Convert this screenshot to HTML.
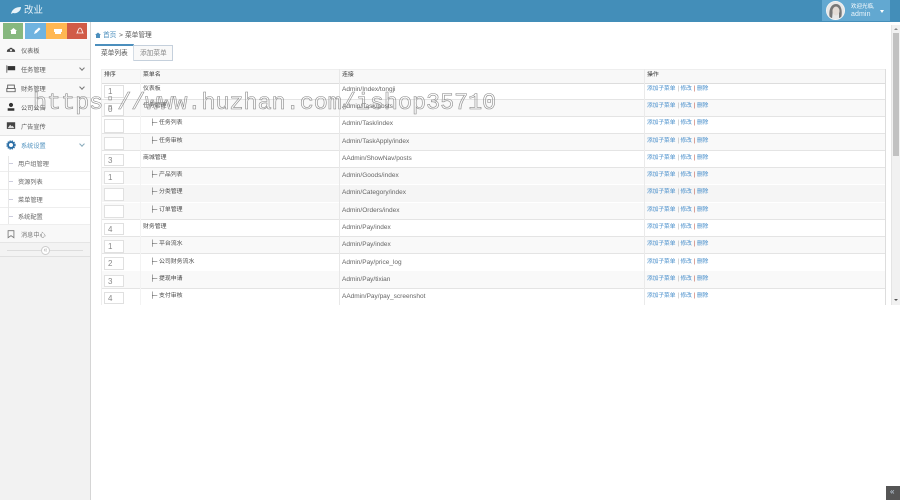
<!DOCTYPE html>
<html>
<head>
<meta charset="utf-8">
<style>
html,body{margin:0;padding:0;width:900px;height:500px;overflow:hidden;background:#fff}
body{font-family:"Liberation Sans","Noto Sans CJK SC",sans-serif;font-size:6.2px;color:#555}
#w{position:absolute;left:0;top:0;width:900px;height:500px;overflow:hidden;filter:blur(.3px)}
.a{position:absolute;white-space:nowrap;line-height:13px}
.box{position:absolute}
.tr{position:absolute;left:101px;width:784px;border-bottom:1px solid #e4e4e4}
.ip{position:absolute;left:104px;width:17px;background:#fff;border:1px solid #e0e0e0;color:#888;font-size:8px;line-height:12px;padding-left:1px;text-indent:2px}
.n{position:absolute;left:143px;white-space:nowrap;line-height:13px;color:#4a4a4a;font-size:5.9px}
.c{left:150px}
.c u{text-decoration:none;display:inline-block;width:9px;font-size:6px;letter-spacing:-1.2px;color:#333}
.l{position:absolute;left:342px;white-space:nowrap;line-height:13px;color:#666;font-size:6.5px}
.o{position:absolute;left:647px;white-space:nowrap;line-height:13px;color:#428bca;font-size:5.7px}
.o i,.o b{font-style:normal;font-weight:normal;font-size:6px;margin:0 1.5px 0 2px}
.o i{color:#aaa}.o b{color:#b74635}
.m{position:absolute;left:0;width:90px;border-bottom:1px solid #e5e5e5;background:#f8f8f8;box-sizing:border-box}
.m span{position:absolute;left:21px;top:4px;line-height:13px;white-space:nowrap;color:#585858}
.m svg{position:absolute;left:6px;top:4px}
.m em{position:absolute;right:6px;top:6px;width:3px;height:3px;border-right:1px solid #777;border-bottom:1px solid #777;transform:rotate(45deg)}
.s{position:absolute;left:0;width:90px;height:17px;background:#fff;border-bottom:1px solid #eee;box-sizing:border-box}
.s span{position:absolute;left:18px;top:3px;line-height:13px;white-space:nowrap;color:#666}
.s:before{content:"";position:absolute;left:9px;top:8px;width:4px;height:1px;background:#ccd}
</style>
</head>
<body>
<div id="w">
<!-- header -->
<div class="box" style="left:0;top:0;width:900px;height:22px;background:#438eb9"></div>
<svg class="box" style="left:10px;top:6px" width="12" height="9" viewBox="0 0 12 9"><path d="M1 8C2 3 6 1 11 1C11 5 7 8 3 7Z" fill="#e8f2f8"/></svg>
<div class="a" style="left:24px;top:4px;font-size:9.500px;color:#e8f2f8">改业</div>
<div class="box" style="left:822px;top:0;width:68px;height:21px;background:#62a8d1"></div>
<div class="box" style="left:826px;top:1px;width:19px;height:19px;border-radius:50%;background:#ddd;overflow:hidden;box-sizing:border-box;border:1px solid #f4f4f4">
<svg width="17" height="17" viewBox="0 0 17 17" style="display:block"><rect width="17" height="17" fill="#e8e8e8"/><path d="M3 17C1 8 4 2 9 2C14 2 16 8 14 17L12 17L12 7L6 7L5 17Z" fill="#777"/><ellipse cx="9" cy="9" rx="3.500" ry="4.500" fill="#e4dcd6"/></svg></div>
<div class="a" style="left:851px;top:1px;font-size:5.500px;color:#fff">欢迎光临,</div>
<div class="a" style="left:851px;top:8px;font-size:7px;letter-spacing:.1px;color:#eaf4fa">admin</div>
<div class="box" style="left:880px;top:10px;width:0;height:0;border-left:2.500px solid transparent;border-right:2.500px solid transparent;border-top:3px solid #fff"></div>

<!-- sidebar -->
<div class="box" style="left:0;top:22px;width:90px;height:478px;background:#f2f2f2;border-right:1px solid #d5d5d5"></div>
<div class="box" style="left:0;top:22px;width:90px;height:18px;background:#fafafa"></div>
<div class="box" style="left:3px;top:23px;width:20px;height:16px;background:#87b87f"></div>
<div class="box" style="left:25px;top:23px;width:21px;height:16px;background:#6fb3e0"></div>
<div class="box" style="left:46px;top:23px;width:21px;height:16px;background:#ffb752"></div>
<div class="box" style="left:67px;top:23px;width:20px;height:16px;background:#d15b47"></div>
<svg class="box" style="left:3px;top:23px" width="84" height="16" viewBox="0 0 84 16" fill="#fff"><path d="M7 8L10.500 5L14 8L13 8L13 11L8 11L8 8Z"/><path d="M31 11L32 8L36 4.500L37.500 6L33.500 10Z"/><path d="M51 6H59V9H58V11H52V9H51Z"/><path d="M74 10C75 9 75 5 77 5C79 5 79 9 80 10Z" fill="none" stroke="#fff" stroke-width=".8"/></svg>

<div class="m" style="top:40px;height:20px"><svg width="10" height="10" viewBox="0 0 12 11"><path d="M1 9A5 5 0 1 1 11 9Z" fill="#444"/><circle cx="6" cy="7" r="1.300" fill="#eee"/><circle cx="3.500" cy="5" r=".8" fill="#eee"/><circle cx="8.500" cy="5" r=".8" fill="#eee"/></svg><span style="top:5px">仪表板</span></div>
<div class="m" style="top:60px;height:19px"><svg width="10" height="10" viewBox="0 0 12 11"><path d="M1 1V10" stroke="#555"/><path d="M2 2H11V7H2Z" fill="#333"/></svg><span>任务管理</span><em></em></div>
<div class="m" style="top:79px;height:19px"><svg width="10" height="10" viewBox="0 0 12 11"><path d="M2 2H10V6H2ZM1 6H11V10H1Z" fill="none" stroke="#555"/></svg><span>财务管理</span><em></em></div>
<div class="m" style="top:98px;height:19px"><svg width="10" height="10" viewBox="0 0 12 11"><circle cx="6" cy="3" r="2.500" fill="#333"/><path d="M2 10V7H10V10Z" fill="#333"/></svg><span>公司公告</span></div>
<div class="m" style="top:117px;height:19px"><svg width="10" height="10" viewBox="0 0 12 11"><rect x="1" y="1" width="10" height="8" fill="#444"/><path d="M2 8L5 4L7 6L8 5L10 8Z" fill="#ddd"/></svg><span>广告宣传</span></div>
<div class="m" style="top:136px;height:20px;background:#fff"><svg width="10" height="10" viewBox="0 0 12 11"><circle cx="6" cy="5.500" r="3.500" fill="none" stroke="#2b6ea5" stroke-width="2.200"/><circle cx="6" cy="5.500" r="5" fill="none" stroke="#2b6ea5" stroke-width="1.200" stroke-dasharray="1.500 1.200"/></svg><span style="color:#4c8fbd">系统设置</span><em style="border-color:#8ab"></em></div>
<div class="box" style="left:0;top:156px;width:90px;height:70px;background:#fff"></div>
<div class="s" style="top:155px"><span>用户组管理</span></div>
<div class="s" style="top:173px"><span>资源列表</span></div>
<div class="s" style="top:191px"><span>菜单管理</span></div>
<div class="s" style="top:208px"><span>系统配置</span></div>
<div class="box" style="left:8px;top:156px;width:1px;height:68px;background:#e8e8e8"></div>
<div class="m" style="top:225px;height:18px;background:#f8f8f8"><svg width="10" height="10" viewBox="0 0 12 11"><path d="M2.500 1.500H9.500V10L6 7.500L2.500 10Z" fill="none" stroke="#777"/></svg><span style="color:#777">消息中心</span></div>
<div class="box" style="left:0;top:243px;width:90px;height:13px;background:#f3f3f3;border-bottom:1px solid #e0e0e0"></div>
<div class="box" style="left:7px;top:250px;width:76px;height:1px;background:#ddd"></div>
<div class="box" style="left:41px;top:246px;width:7px;height:7px;border:1px solid #ccc;border-radius:50%;background:#fff;font-size:7px;line-height:7px;text-align:center;color:#aaa">«</div>

<!-- breadcrumb -->
<svg class="box" style="left:95px;top:32px" width="6" height="6" viewBox="0 0 6 6"><path d="M0 3L3 .5L6 3H5V6H1V3Z" fill="#4c8fbd"/></svg>
<div class="a" style="left:103px;top:29px;font-size:6.700px;color:#4c8fbd">首页</div>
<div class="a" style="left:119px;top:29px;font-size:6.700px;color:#555">&gt;</div>
<div class="a" style="left:125px;top:29px;font-size:6.700px;color:#555">菜单管理</div>

<!-- tabs -->
<div class="box" style="left:95px;top:44px;width:39px;height:17px;background:#fff;border-top:2px solid #4c8fbd;border-right:1px solid #d5dde5;box-sizing:border-box"></div>
<div class="box" style="left:134px;top:45px;width:39px;height:16px;background:#f9f9f9;border:1px solid #c5d0dc;border-left:none;box-sizing:border-box"></div>
<div class="a" style="left:101px;top:47px;font-size:6.700px;color:#555">菜单列表</div>
<div class="a" style="left:140px;top:47px;font-size:6.700px;color:#888">添加菜单</div>

<!-- table -->
<div class="box" style="left:101px;top:69px;width:784px;height:13px;background:#f8f8f8;border-top:1px solid #eee;border-bottom:2px solid #ddd"></div>
<div class="tr" style="top:84px;height:15px;background:#fff"></div>
<div class="tr" style="top:100px;height:16px;background:#f9f9f9"></div>
<div class="tr" style="top:117px;height:16px;background:#fff"></div>
<div class="tr" style="top:134px;height:16px;background:#f9f9f9"></div>
<div class="tr" style="top:151px;height:16px;background:#fff"></div>
<div class="tr" style="top:168px;height:16px;background:#f9f9f9;border-bottom:none"></div>
<div class="tr" style="top:185px;height:17px;background:#f5f5f5;border-bottom:none"></div>
<div class="tr" style="top:203px;height:16px;background:#f9f9f9"></div>
<div class="tr" style="top:220px;height:16px;background:#fff"></div>
<div class="tr" style="top:237px;height:16px;background:#f9f9f9"></div>
<div class="tr" style="top:254px;height:17px;background:#fff;border-bottom:none"></div>
<div class="tr" style="top:271px;height:17px;background:#f9f9f9"></div>
<div class="tr" style="top:289px;height:16px;background:#fff;border-bottom:none"></div>
<div class="box" style="left:101px;top:69px;width:1px;height:236px;background:#eee"></div>
<div class="box" style="left:140px;top:69px;width:1px;height:236px;background:#f3f3f3"></div>
<div class="box" style="left:339px;top:69px;width:1px;height:236px;background:#e8e8e8"></div>
<div class="box" style="left:644px;top:69px;width:1px;height:236px;background:#eaeaea"></div>
<div class="box" style="left:885px;top:69px;width:1px;height:236px;background:#ddd"></div>

<div class="a" style="left:104px;top:69px;font-size:5.900px;color:#333">排序</div>
<div class="a" style="left:143px;top:69px;font-size:5.900px;color:#333">菜单名</div>
<div class="a" style="left:342px;top:69px;font-size:5.900px;color:#333">连接</div>
<div class="a" style="left:647px;top:69px;font-size:5.900px;color:#333">操作</div>

<div class="ip" style="top:85px;height:11px">1</div>
<div class="ip" style="top:103px;height:11px">0</div>
<div class="ip" style="top:119px;height:12px"></div>
<div class="ip" style="top:137px;height:11px"></div>
<div class="ip" style="top:154px;height:10px">3</div>
<div class="ip" style="top:171px;height:11px">1</div>
<div class="ip" style="top:188px;height:11px"></div>
<div class="ip" style="top:205px;height:11px"></div>
<div class="ip" style="top:223px;height:10px">4</div>
<div class="ip" style="top:240px;height:11px">1</div>
<div class="ip" style="top:257px;height:11px">2</div>
<div class="ip" style="top:275px;height:10px">3</div>
<div class="ip" style="top:292px;height:10px">4</div>

<div class="n" style="top:83px">仪表板</div>
<div class="n" style="top:100px">任务管理</div>
<div class="n c" style="top:117px"><u>├─</u>任务列表</div>
<div class="n c" style="top:135px"><u>├─</u>任务审核</div>
<div class="n" style="top:152px">商城管理</div>
<div class="n c" style="top:169px"><u>├─</u>产品列表</div>
<div class="n c" style="top:186px"><u>├─</u>分类管理</div>
<div class="n c" style="top:204px"><u>├─</u>订单管理</div>
<div class="n" style="top:221px">财务管理</div>
<div class="n c" style="top:238px"><u>├─</u>平台流水</div>
<div class="n c" style="top:256px"><u>├─</u>公司财务流水</div>
<div class="n c" style="top:273px"><u>├─</u>提现申请</div>
<div class="n c" style="top:290px"><u>├─</u>支付审核</div>

<div class="l" style="top:83px">Admin/Index/tongji</div>
<div class="l" style="top:100px">Admin/Task/posts</div>
<div class="l" style="top:117px">Admin/Task/index</div>
<div class="l" style="top:135px">Admin/TaskApply/index</div>
<div class="l" style="top:152px">AAdmin/ShowNav/posts</div>
<div class="l" style="top:169px">Admin/Goods/index</div>
<div class="l" style="top:186px">Admin/Category/index</div>
<div class="l" style="top:204px">Admin/Orders/index</div>
<div class="l" style="top:221px">Admin/Pay/index</div>
<div class="l" style="top:238px">Admin/Pay/index</div>
<div class="l" style="top:256px">Admin/Pay/price_log</div>
<div class="l" style="top:273px">Admin/Pay/tixian</div>
<div class="l" style="top:290px">AAdmin/Pay/pay_screenshot</div>

<div class="o" style="top:83px">添加子菜单<i>|</i>修改<b>|</b>删除</div>
<div class="o" style="top:100px">添加子菜单<i>|</i>修改<b>|</b>删除</div>
<div class="o" style="top:117px">添加子菜单<i>|</i>修改<b>|</b>删除</div>
<div class="o" style="top:135px">添加子菜单<i>|</i>修改<b>|</b>删除</div>
<div class="o" style="top:152px">添加子菜单<i>|</i>修改<b>|</b>删除</div>
<div class="o" style="top:169px">添加子菜单<i>|</i>修改<b>|</b>删除</div>
<div class="o" style="top:186px">添加子菜单<i>|</i>修改<b>|</b>删除</div>
<div class="o" style="top:204px">添加子菜单<i>|</i>修改<b>|</b>删除</div>
<div class="o" style="top:221px">添加子菜单<i>|</i>修改<b>|</b>删除</div>
<div class="o" style="top:238px">添加子菜单<i>|</i>修改<b>|</b>删除</div>
<div class="o" style="top:256px">添加子菜单<i>|</i>修改<b>|</b>删除</div>
<div class="o" style="top:273px">添加子菜单<i>|</i>修改<b>|</b>删除</div>
<div class="o" style="top:290px">添加子菜单<i>|</i>修改<b>|</b>删除</div>

<!-- scrollbar -->
<div class="box" style="left:891px;top:25px;width:9px;height:280px;background:#f1f1f1;border-left:1px solid #e4e4e4;box-sizing:border-box"></div>
<div class="box" style="left:893px;top:33px;width:6px;height:123px;background:#c1c1c1"></div>
<div class="box" style="left:894px;top:28px;width:0;height:0;border-left:2px solid transparent;border-right:2px solid transparent;border-bottom:2px solid #888"></div>
<div class="box" style="left:894px;top:299px;width:0;height:0;border-left:2px solid transparent;border-right:2px solid transparent;border-top:2px solid #555"></div>

<!-- back to top -->
<div class="box" style="left:886px;top:486px;width:14px;height:14px;background:#555"></div>
<div class="a" style="left:890px;top:485px;font-size:8px;color:#cde">«</div>

<!-- watermark -->
<div class="a" style="left:33px;top:90px;font-family:'Liberation Mono',monospace;font-size:23.400px;line-height:28px;color:transparent;-webkit-text-stroke:.6px #8a8a8a">https://www.huzhan.com/ishop35710</div>
</div>
</body>
</html>
